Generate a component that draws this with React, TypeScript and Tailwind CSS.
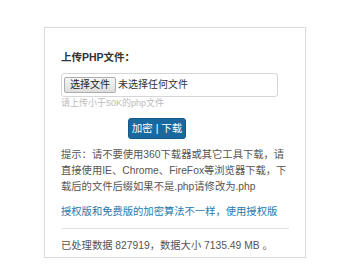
export default function App() {
  return (
    <div
      className="min-h-[280px] bg-white pt-[27px]"
      style={{ fontFamily: '"Liberation Sans", "Noto Sans CJK SC", sans-serif' }}
    >
      <div className="mx-auto w-[262px] border border-[#dcdcdc] px-4 pt-[21px] pb-[3px] shadow-[0_0_1px_#e5e5e5]">
        <form onSubmit={(e) => e.preventDefault()}>
          {/* upload field */}
          <label className="block text-[10.5px] leading-[16px] font-bold text-[#333]">上传PHP文件：</label>
          <div className="mt-2 flex h-6 w-[217px] items-center rounded-[3px] border border-[#d6d6d6] px-[2px]">
            <button
              type="button"
              className="h-4 rounded-[2px] border border-[#adadad] bg-gradient-to-b from-[#f6f6f6] to-[#dddddd] px-[5px] text-[10px] leading-[14px] text-[#222]"
            >
              选择文件
            </button>
            <span className="ml-[2px] text-[10px] leading-[14px] text-[#333]">未选择任何文件</span>
          </div>
          <p className="text-[9px] leading-[13px] text-[#bbb]">请上传小于50K的php文件</p>

          <button
            type="submit"
            className="mt-[8px] ml-[67px] h-[21px] w-[58px] rounded-[3px] border border-[#13598a] bg-[#186a9e] text-[10.5px] leading-[19px] text-white"
          >
            加密 | 下载
          </button>
        </form>

        <p className="mt-[8px] text-[10.3px] leading-[15.75px] text-[#555]">
          提示：请不要使用360下载器或其它工具下载，请直接使用IE、Chrome、FireFox等浏览器下载，下载后的文件后缀如果不是.php请修改为.php
        </p>

        <p className="mt-[10px] text-[10.3px] leading-[15.75px]">
          <a href="#" className="text-[#2a78ad]">
            授权版和免费版的加密算法不一样，使用授权版
          </a>
        </p>

        <hr className="mt-[8px] border-t border-[#e0e0e0]" />

        <p className="mt-[9px] text-[10.3px] leading-[15.75px] text-[#555]">
          已处理数据 827919，数据大小 7135.49 MB 。
        </p>
      </div>
    </div>
  );
}
